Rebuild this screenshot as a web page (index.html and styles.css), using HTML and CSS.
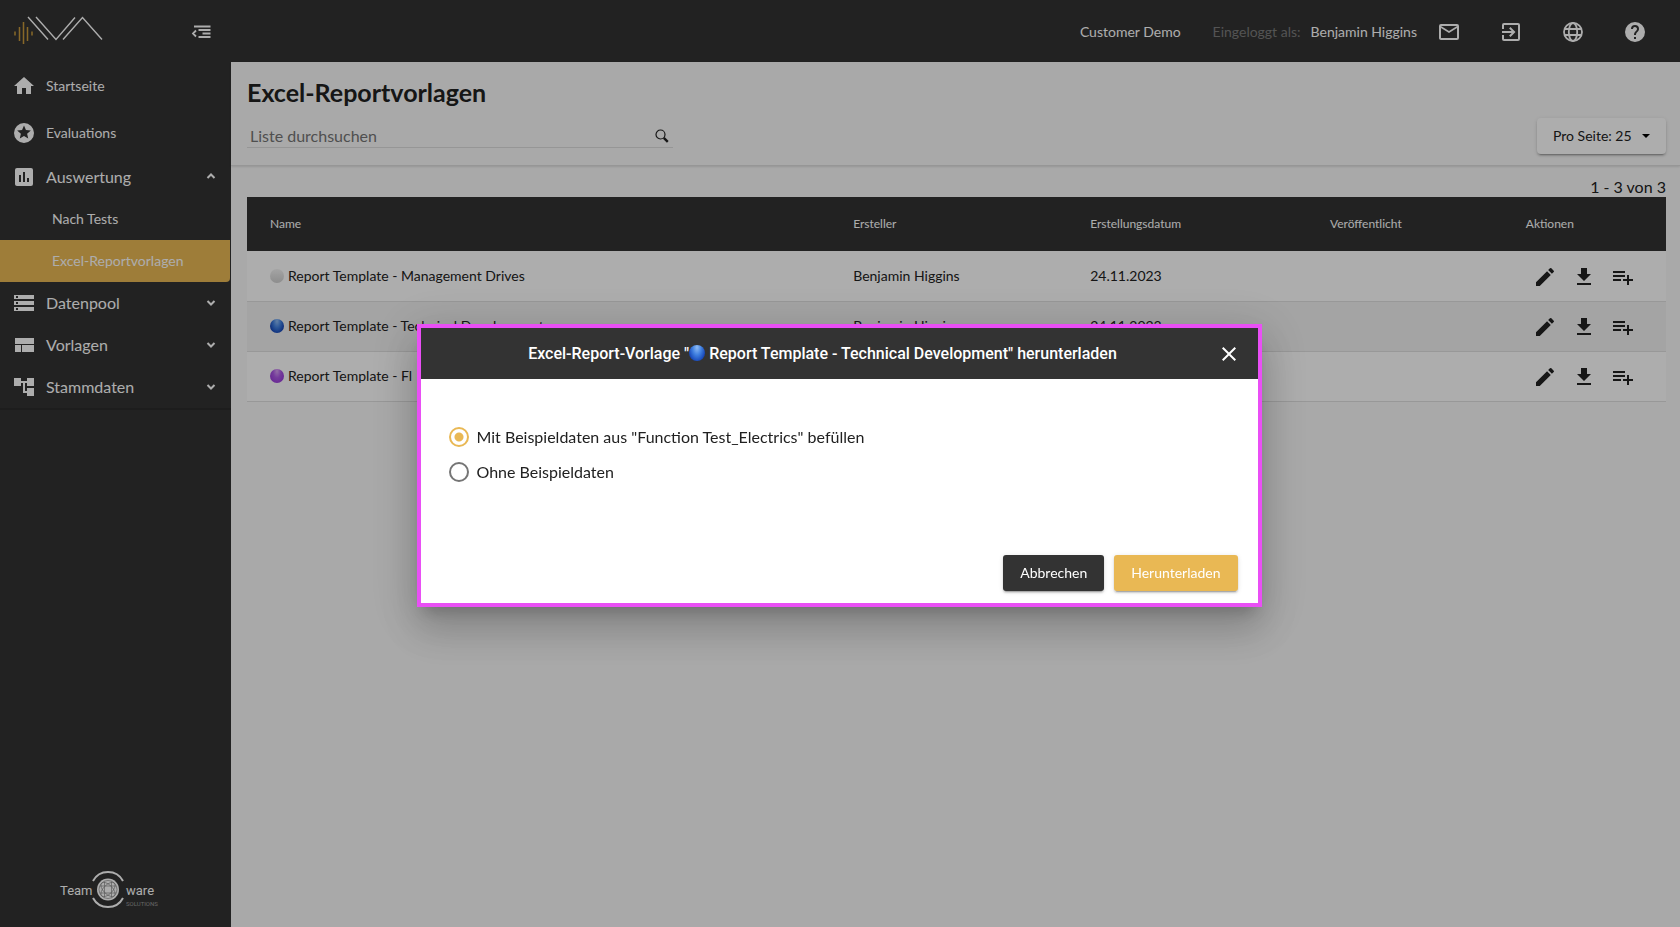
FILE: index.html
```html
<!DOCTYPE html>
<html lang="de">
<head>
<meta charset="utf-8">
<meta name="viewport" content="width=device-width, initial-scale=1">
<title>Excel-Reportvorlagen</title>
<link rel="stylesheet" href="styles.css">
</head>
<body>
<svg class="sprite" aria-hidden="true">
  <symbol id="edit" viewBox="0 0 24 24"><path d="M3 17.25V21h3.75L17.81 9.94l-3.75-3.75L3 17.25zM20.71 7.04a1 1 0 0 0 0-1.41l-2.34-2.34a1 1 0 0 0-1.41 0l-1.83 1.83 3.75 3.75 1.83-1.83z"/></symbol>
  <symbol id="download" viewBox="0 0 24 24"><path d="M19 9h-4V3H9v6H5l7 7 7-7zM5 18v2h14v-2H5z"/></symbol>
  <symbol id="listadd" viewBox="0 0 24 24"><path d="M14 10H2v2h12v-2zm0-4H2v2h12V6zm4 8v-4h-2v4h-4v2h4v4h2v-4h4v-2h-4zM2 16h8v-2H2v2z"/></symbol>
  <symbol id="down" viewBox="0 0 10 10"><path d="M1.500 3 5 6.500 8.500 3" fill="none" stroke="currentColor" stroke-width="2"/></symbol>
  <symbol id="up" viewBox="0 0 10 10"><path d="M1.500 6 5 2.500 8.500 6" fill="none" stroke="currentColor" stroke-width="2"/></symbol>
</svg>
<div class="app">
  <aside class="sidebar">
    <div class="brand">
      <svg class="logo" viewBox="0 0 94 32" fill="none" role="img" aria-label="IVA">
        <path d="M3 17.500v4M7.500 13v14M11.500 8v22M15.500 13v14M20 17.500v4" stroke="#c99a3c" stroke-width="1.500"/>
        <path d="M16 3l20 22.500M24 3l20 22.500L63 3.500M51 25.500 70.500 3.500 90 25.500" stroke="#fff" stroke-width="1.400"/>
      </svg>
      <button class="icon-btn" aria-label="Menü einklappen">
        <svg class="icon-menu" viewBox="0 0 20 14" fill="none" stroke="currentColor" stroke-width="1.800"><path d="M3 1.500h16.500M7.500 5h12M11.500 8.500h8M7.500 12h12M5 5.500 2 8.500l3 3"/></svg>
      </button>
    </div>
    <nav class="nav">
      <a class="item tall" href="#"><svg class="icon" viewBox="0 0 24 24"><path d="M10 20v-6h4v6h5v-8h3L12 3 2 12h3v8z"/></svg>Startseite</a>
      <a class="item tall" href="#"><svg class="icon" viewBox="0 0 24 24"><path fill-rule="evenodd" d="M12 2a10 10 0 1 0 0 20 10 10 0 0 0 0-20zm4.230 15.500L12 14.900l-4.230 2.600 1.120-4.800-3.730-3.230 4.910-.42L12 4.500l1.930 4.550 4.910.42-3.730 3.230 1.120 4.800z"/></svg>Evaluations</a>
      <a class="item group" href="#"><svg class="icon" viewBox="0 0 24 24"><path fill-rule="evenodd" d="M19 3H5a2 2 0 0 0-2 2v14c0 1.100.9 2 2 2h14a2 2 0 0 0 2-2V5a2 2 0 0 0-2-2zM9 17H7v-7h2v7zm4 0h-2V7h2v10zm4 0h-2v-4h2v4z"/></svg>Auswertung<svg class="chev"><use href="#up"/></svg></a>
      <a class="item sub" href="#">Nach Tests</a>
      <a class="item sub active" href="#" aria-current="page">Excel-Reportvorlagen</a>
      <a class="item group" href="#"><svg class="icon" viewBox="0 0 24 24"><path fill-rule="evenodd" d="M2 20h20v-4H2v4zm2-3h2v2H4v-2zM2 4v4h20V4H2zm4 3H4V5h2v2zm-4 7h20v-4H2v4zm2-3h2v2H4v-2z"/></svg>Datenpool<svg class="chev"><use href="#down"/></svg></a>
      <a class="item group" href="#"><svg class="icon" viewBox="0 0 24 24"><path d="M3 19h6v-7H3v7zm7 0h12v-7H10v7zM3 5v6h19V5H3z"/></svg>Vorlagen<svg class="chev"><use href="#down"/></svg></a>
      <a class="item group" href="#"><svg class="icon" viewBox="0 0 24 24"><path d="M22 11V3h-7v3H9V3H2v8h7V8h2v10h4v3h7v-8h-7v3h-2V8h2v3z"/></svg>Stammdaten<svg class="chev"><use href="#down"/></svg></a>
    </nav>
    <svg class="vendor" viewBox="0 0 100 40">
      <text class="vendor-name" x="0" y="25">Team</text>
      <text class="vendor-name" x="66" y="25">ware</text>
      <text class="vendor-sub" x="66" y="36">SOLUTIONS</text>
      <g fill="none" stroke="currentColor" stroke-width="2"><path d="M33 11a17 17 0 0 1 30 0M33 28a17 17 0 0 0 30 0"/></g>
      <circle cx="48" cy="19.500" r="11" fill="currentColor"/>
      <g fill="none" stroke="#888" stroke-width=".7"><circle cx="48" cy="19.500" r="9"/><ellipse cx="48" cy="19.500" rx="9" ry="4.500" transform="rotate(45 48 19.500)"/><ellipse cx="48" cy="19.500" rx="9" ry="4.500" transform="rotate(-45 48 19.500)"/><path d="M40 16h16M40 23h16M44.500 11.500v16M51.500 11.500v16"/></g>
    </svg>
  </aside>
  <div class="main">
    <header class="topbar">
      <span class="customer">Customer Demo</span>
      <span class="user"><span class="muted">Eingeloggt als:</span><span>Benjamin Higgins</span></span>
      <div class="tools">
        <button class="icon-btn" aria-label="Nachrichten"><svg class="icon" viewBox="0 0 24 24"><path fill-rule="evenodd" d="M22 6a2 2 0 0 0-2-2H4a2 2 0 0 0-2 2v12c0 1.100.9 2 2 2h16a2 2 0 0 0 2-2V6zm-2 0-8 5-8-5h16zm0 12H4V8l8 5 8-5v10z"/></svg></button>
        <button class="icon-btn" aria-label="Abmelden"><svg class="icon" viewBox="0 0 24 24"><path d="M10.090 15.590 11.500 17l5-5-5-5-1.410 1.410L12.670 11H3v2h9.670l-2.580 2.590zM19 3H5a2 2 0 0 0-2 2v4h2V5h14v14H5v-4H3v4a2 2 0 0 0 2 2h14a2 2 0 0 0 2-2V5a2 2 0 0 0-2-2z"/></svg></button>
        <button class="icon-btn" aria-label="Sprache"><svg class="icon line" viewBox="0 0 24 24"><circle cx="12" cy="12" r="9"/><ellipse cx="12" cy="12" rx="4.200" ry="9"/><path d="M3.800 9h16.400M3.800 15h16.400"/></svg></button>
        <button class="icon-btn" aria-label="Hilfe"><svg class="icon" viewBox="0 0 24 24"><path d="M12 2a10 10 0 1 0 0 20 10 10 0 0 0 0-20zm1 17h-2v-2h2v2zm2.070-7.750-.9.920C13.450 12.900 13 13.500 13 15h-2v-.5c0-1.100.45-2.100 1.170-2.830l1.240-1.260A2 2 0 1 0 10 9H8a4 4 0 1 1 8 0c0 .88-.36 1.680-.93 2.250z"/></svg></button>
      </div>
    </header>
    <section class="toolbar">
      <h1>Excel-Reportvorlagen</h1>
      <div class="filters">
        <label class="search"><input type="text" placeholder="Liste durchsuchen" aria-label="Liste durchsuchen">
          <svg class="icon-search" viewBox="0 0 14 14" fill="none" stroke="currentColor"><circle cx="5.500" cy="5.500" r="4.500" stroke-width="1.200"/><path d="m8.800 8.800 4 4" stroke-width="2.400"/></svg></label>
        <div class="pager"><select aria-label="Pro Seite"><option>Pro Seite: 25</option></select><svg class="caret" viewBox="0 0 8 4"><path d="M0 0h8L4 4z"/></svg></div>
      </div>
    </section>
    <main class="content">
      <p class="count">1 - 3 von 3</p>
      <table class="list">
        <colgroup><col class="c-name"><col class="c-creator"><col class="c-date"><col class="c-pub"><col></colgroup>
        <thead><tr><th>Name</th><th>Ersteller</th><th>Erstellungsdatum</th><th>Veröffentlicht</th><th>Aktionen</th></tr></thead>
        <tbody>
          <tr><td><i class="ball white"></i>Report Template - Management Drives</td><td>Benjamin Higgins</td><td>24.11.2023</td><td></td><td class="act"><div class="actions"><button class="icon-btn" aria-label="Bearbeiten"><svg class="icon"><use href="#edit"/></svg></button><button class="icon-btn" aria-label="Herunterladen"><svg class="icon"><use href="#download"/></svg></button><button class="icon-btn" aria-label="Hinzufügen"><svg class="icon"><use href="#listadd"/></svg></button></div></td></tr>
          <tr><td><i class="ball blue"></i>Report Template - Technical Development</td><td>Benjamin Higgins</td><td>24.11.2023</td><td></td><td class="act"><div class="actions"><button class="icon-btn" aria-label="Bearbeiten"><svg class="icon"><use href="#edit"/></svg></button><button class="icon-btn" aria-label="Herunterladen"><svg class="icon"><use href="#download"/></svg></button><button class="icon-btn" aria-label="Hinzufügen"><svg class="icon"><use href="#listadd"/></svg></button></div></td></tr>
          <tr><td><i class="ball purple"></i>Report Template - Fl</td><td></td><td></td><td></td><td class="act"><div class="actions"><button class="icon-btn" aria-label="Bearbeiten"><svg class="icon"><use href="#edit"/></svg></button><button class="icon-btn" aria-label="Herunterladen"><svg class="icon"><use href="#download"/></svg></button><button class="icon-btn" aria-label="Hinzufügen"><svg class="icon"><use href="#listadd"/></svg></button></div></td></tr>
        </tbody>
      </table>
    </main>
  </div>
</div>
<div class="backdrop">
  <form class="dialog" role="dialog" aria-labelledby="dlg-title">
    <div class="dialog-head">
      <h2 id="dlg-title">Excel-Report-Vorlage "<i class="ball blue large"></i> Report Template - Technical Development" herunterladen</h2>
      <button type="button" class="icon-btn" aria-label="Schließen"><svg class="icon" viewBox="0 0 24 24"><path d="M19 6.410 17.590 5 12 10.590 6.410 5 5 6.410 10.590 12 5 17.590 6.410 19 12 13.410 17.590 19 19 17.590 13.410 12z"/></svg></button>
    </div>
    <div class="dialog-body">
      <label class="choice"><input type="radio" name="mode" checked>Mit Beispieldaten aus "Function Test_Electrics" befüllen</label>
      <label class="choice"><input type="radio" name="mode">Ohne Beispieldaten</label>
    </div>
    <div class="dialog-foot">
      <button type="button" class="btn dark">Abbrechen</button>
      <button type="button" class="btn gold">Herunterladen</button>
    </div>
  </form>
</div>
</body>
</html>
```
FILE: styles.css
```css
* { box-sizing: border-box; }
body { margin: 0; font: 16px/24px Lato, "Open Sans", sans-serif; color: #212121; background: #fafafa; }
h1, h2, p { margin: 0; }
button, input, select { font: inherit; color: inherit; }
.sprite { position: absolute; width: 0; height: 0; }
.icon { display: block; width: 24px; height: 24px; fill: currentColor; flex: none; }
.line { fill: none; stroke: currentColor; stroke-width: 1.8; }
.icon-btn { display: block; padding: 0; border: 0; background: none; cursor: pointer; }
.app { display: flex; min-height: 100vh; }

.sidebar { display: flex; flex-direction: column; flex: none; width: 231px; padding-bottom: 17px; background: #333; color: #fff; }
.brand { display: flex; justify-content: space-between; padding: 14px 20px 0 12px; height: 62px; }
.logo { width: 94px; height: 32px; }
.brand .icon-btn { height: 36px; }
.icon-menu { display: block; width: 20px; height: 14px; }
.nav { padding-right: 1px; border-bottom: 2px solid #2b2b2b; }
.item { display: flex; align-items: center; gap: 10px; height: 42px; padding: 0 14px 0 12px; color: #fff; text-decoration: none; }
.tall { height: 47px; font-size: 14px; }
.sub { padding-left: 52px; font-size: 14px; }
.active { background: #e9b854; border-radius: 0 0 4px 0; }
.chev { width: 10px; height: 10px; margin-left: auto; }
.vendor { width: 100px; height: 40px; margin: auto 0 0 60px; color: #fff; overflow: visible; }
.vendor-name { font: 13px "Liberation Sans Narrow", "Roboto", sans-serif; fill: currentColor; }
.vendor-sub { font: 6px "Liberation Sans Narrow", "Roboto", sans-serif; fill: #999; }

.main { flex: 1; min-width: 0; }
.topbar { display: flex; align-items: center; justify-content: flex-end; height: 62px; padding: 2px 33px 0 20px; background: #333; color: #fff; font-size: 14px; }
.user { display: flex; gap: 10px; margin-left: 32px; }
.muted { color: #7c7c7c; }
.tools { display: flex; gap: 38px; margin-left: 20px; }

.toolbar { padding: 14px 14px 11px 16px; border-bottom: 1px solid #ddd; box-shadow: 0 1px 2px rgba(0, 0, 0, .12); }
h1 { font-size: 25px; line-height: 32px; font-weight: 700; }
.filters { display: flex; justify-content: space-between; align-items: flex-start; padding-top: 10px; }
.search { display: flex; align-items: center; width: 426px; height: 30px; padding: 6px 4px 0 3px; border-bottom: 1px solid #ddd; }
.search input { flex: 1; min-width: 0; padding: 0; border: 0; outline: 0; background: none; }
.search input::placeholder { color: #757575; opacity: 1; }
.icon-search { width: 14px; height: 14px; }
.pager { display: grid; align-items: center; border-radius: 4px; background: #fff; box-shadow: 0 3px 1px -2px rgba(0, 0, 0, .2), 0 2px 2px rgba(0, 0, 0, .14), 0 1px 5px rgba(0, 0, 0, .12); }
.pager > * { grid-area: 1 / 1; }
.pager select { width: 129px; height: 36px; padding: 0 16px; border: 0; background: none; appearance: none; font-size: 14px; }
.caret { width: 8px; height: 4px; justify-self: end; margin-right: 16px; pointer-events: none; }

.content { padding: 11px 14px 16px 16px; }
.count { text-align: right; line-height: 20px; }
.list { width: 100%; table-layout: fixed; border-collapse: collapse; background: #fff; font-size: 14px; line-height: 20px; }
.c-name { width: 41.1%; }
.c-creator { width: 16.7%; }
.c-date { width: 16.9%; }
.c-pub { width: 13.8%; }
.list th { height: 54px; padding: 0 0 0 23px; background: #333; color: #fff; font-size: 12px; font-weight: 400; text-align: left; }
.list td { height: 50px; padding: 0 0 0 23px; border-bottom: 1px solid #e0e0e0; white-space: nowrap; }
.list tr:nth-child(even) td { background: #f2f2f2; }
.list td.act { padding: 2px 0 0 30px; }
.actions { display: flex; gap: 15px; }
.ball { display: inline-block; width: 14px; height: 14px; margin-right: 4px; border-radius: 50%; vertical-align: -2px; }
.white { background: linear-gradient(#f2f2f2, #d0d0d0); }
.blue { background: radial-gradient(ellipse at 50% 15%, #8fbcf5 0, #3f7fe0 40%, #1747b8 75%); }
.purple { background: radial-gradient(ellipse at 50% 15%, #d9a0f5 0, #ac58e6 40%, #9c3fdc 75%); }
.large { width: 16px; height: 16px; margin: 0; }

.backdrop { position: fixed; inset: 0; display: flex; align-items: center; justify-content: center; padding: 4px 2px 0 0; background: rgba(0, 0, 0, .32); }
.dialog { width: 845px; max-width: 94vw; border: 4px solid #e94ff5; background: #fff; box-shadow: 0 11px 15px -7px rgba(0, 0, 0, .2), 0 24px 38px 3px rgba(0, 0, 0, .14), 0 9px 46px 8px rgba(0, 0, 0, .12); }
.dialog-head { display: flex; align-items: center; gap: 12px; height: 51px; padding: 0 17px 0 20px; background: #333; color: #fff; }
.dialog-head h2 { flex: 1; font: 500 16px/24px Roboto, sans-serif; text-align: center; }
.dialog-body { display: flex; flex-direction: column; gap: 11px; padding: 46px 28px 71px; }
.choice { display: flex; align-items: center; gap: 8px; }
.choice input { appearance: none; width: 20px; height: 20px; margin: 0; border: 2px solid #757575; border-radius: 50%; background: #fff; }
.choice input:checked { border-color: #e9b854; background: radial-gradient(circle, #e9b854 4px, #fff 5px); }
.dialog-foot { display: flex; justify-content: flex-end; gap: 10px; padding: 0 20px 12px; }
.btn { height: 36px; padding: 0 17px; border: 0; border-radius: 3px; color: #fff; font-size: 14px; box-shadow: 0 3px 1px -2px rgba(0, 0, 0, .2), 0 2px 2px rgba(0, 0, 0, .14), 0 1px 5px rgba(0, 0, 0, .12); }
.dark { background: #333; }
.gold { background: #e9b854; }
```
